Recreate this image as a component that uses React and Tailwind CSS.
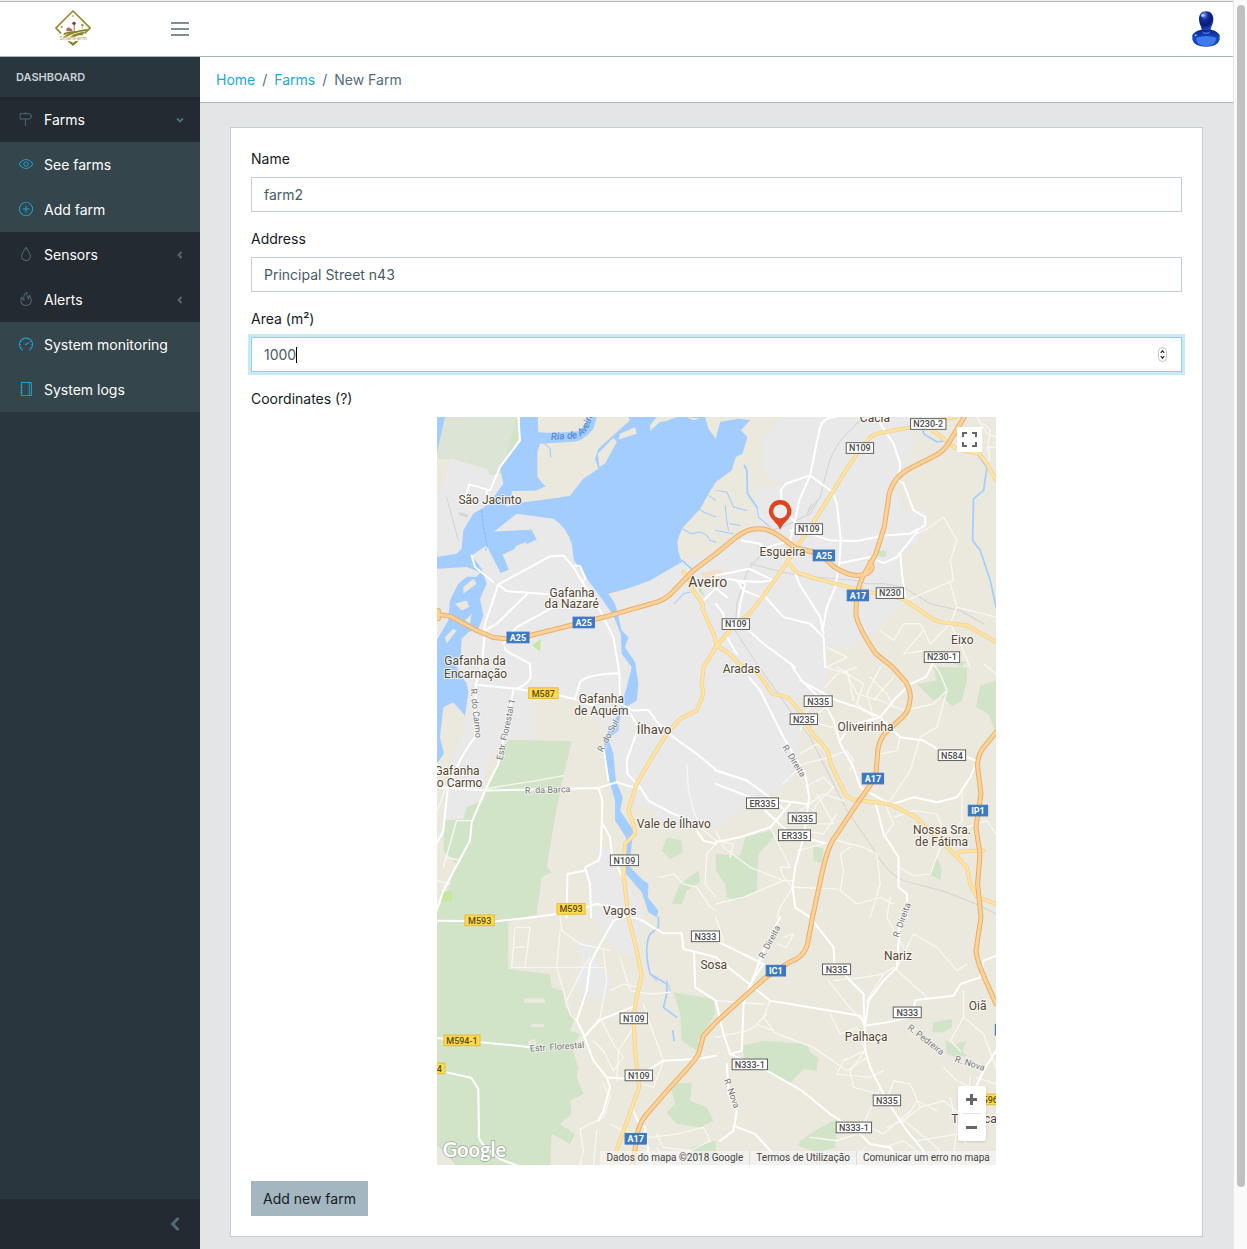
import React from "react";
import { SlDirection, SlEye, SlPlus, SlDrop, SlFire, SlSpeedometer, SlNotebook } from "react-icons/sl";

/* Map drawing. The canvas is 1677 x 2244 units; three units make one pixel. */

const MOTORWAYS = [
  "M5,605V580M5,592L40,597L120,640L170,661L210,665L280,655L400,625L520,595L660,555Q690,545 710,522L770,460L837,410L880,375Q915,345 940,338Q965,332 985,337Q1010,343 1035,362L1075,392Q1120,402 1150,412L1190,448Q1230,475 1262,475Q1300,474 1306,450L1300,435",
  "M1582,0L1537,75Q1520,105 1487,120L1417,155Q1370,180 1357,230L1342,330L1317,410L1277,480Q1257,520 1257,590Q1262,630 1317,710L1367,750L1407,795Q1424,825 1419,850Q1417,880 1397,900L1342,950Q1322,980 1322,1010L1317,1070Q1312,1090 1267,1150L1187,1270Q1172,1295 1157,1360L1127,1500L1112,1580Q1102,1620 1057,1635L987,1680L837,1815L800,1855L785,1910Q780,1925 700,2010L630,2090Q605,2120 600,2160L588,2244",
  "M1677,945L1645,985Q1620,1010 1622,1050L1632,1130L1617,1230L1629,1310L1622,1400L1632,1500L1617,1600Q1620,1630 1642,1680L1677,1760",
];

const MAIN_ROADS = [
  "M1557,0L1527,5L1427,30L1347,45Q1310,48 1297,65L1267,100L1227,160L1187,225L1127,320L1087,380L1052,435L977,540L937,590L887,630L837,690L800,750L795,800L800,830L780,880L730,905L690,950L640,1030L600,1100L575,1180L590,1220L595,1250L565,1280L560,1370L575,1500L600,1600L615,1675L600,1740L590,1800L595,1900L607,2010L575,2100L535,2210L525,2244",
  "M1052,430L1077,465L1137,485L1237,510L1297,525L1397,545L1457,585Q1490,610 1512,615L1590,625L1677,675",
  "M740,465L755,480L765,515L798,560L797,575L830,650L840,685L877,710L912,745L965,770L1007,830L1052,840L1087,880L1127,950L1172,1000L1182,1040L1225,1130Q1240,1150 1267,1150L1357,1160L1437,1200L1477,1240L1557,1315L1590,1350L1600,1400L1620,1438L1677,1460",
  "M1557,1315Q1562,1302 1580,1302L1640,1300",
  "M1487,40L1557,95L1627,110L1650,140L1677,190",
];

const WHITE_ROADS = [
  "M245,0L250,70L190,150L160,220L98,202L88,235M150,222L155,260",
  "M140,650L145,620L185,502L340,418L380,415L410,450L440,500L490,580L530,660L545,750L548,770",
  "M185,502L210,522L345,532L480,550M270,532L180,620L145,640L135,750L118,800",
  "M415,445L430,447L447,485L435,495M105,415L115,450L170,495",
  "M205,690Q200,700 240,718L280,740L282,780Q275,800 240,815L115,802M240,815L270,820M350,830L420,848L470,865M200,680L240,630L350,570",
  "M548,768Q450,770 430,795L417,840M548,768L550,860L590,880L635,878L665,920L710,960L780,1010L840,1060L930,1090L985,1130L1045,1180",
  "M575,880L605,930L570,1030L572,1070L610,1110L635,1150L700,1185L760,1210L800,1270L837,1280",
  "M118,800L115,960Q90,990 60,1050L35,1100L20,1240L0,1280",
  "M230,820L185,1040L145,1120L105,1215L100,1270L20,1420L0,1480",
  "M0,1110L150,1120L485,1112L540,1095L605,1115M500,990L515,1090M485,1112L497,1150L495,1215L520,1260L525,1310L555,1375M495,1215L492,1310L485,1330L445,1350L460,1400L463,1500",
  "M390,1500L392,1370L445,1360M0,1510L180,1512L290,1500L400,1485L480,1460L575,1475",
  "M570,1495L530,1510L485,1590L460,1640L450,1720L420,1810L440,1850L470,1930L510,1980L520,2010L500,2080L485,2110",
  "M575,1500Q610,1500 640,1525L680,1548L735,1548L740,1595L800,1610L837,1620",
  "M772,1605L775,1710L837,1750L860,1850L880,1910M510,1980L590,1985L680,1930L780,1925L837,1915",
  "M590,1768L490,1808L440,1860M0,1862L170,1878L290,1890M30,1965L105,1982L125,2015L127,2160Q130,2180 190,2225L240,2244",
  "M585,2070L605,2115L625,2130L640,2244",
  "M1197,0Q1160,0 1150,30L1135,100L1120,175L1087,250L1075,310L1060,370M1120,175L1047,200L1032,220L1035,270L1060,300L1080,320",
  "M1120,175L1187,225L1200,260L1212,370L1207,440L1195,510L1170,570L1157,640M1060,340L1120,350L1180,370L1260,372L1340,355L1420,350L1465,325L1465,300L1430,280L1400,200L1385,190L1390,140L1370,80L1330,20",
  "M1212,438L1260,428L1300,420L1340,438L1380,420L1440,345M1390,410L1395,470L1407,550",
  "M915,370L970,380L980,395L1060,370M837,475L937,455L1010,490L960,495L900,490L870,485M970,540L920,520L900,490L925,500L910,560L900,630M977,530L1040,600L1120,620L1160,660L1165,750M1060,430L1087,500L1150,600L1160,650",
  "M840,510L800,550M870,540L840,515M837,560L860,590L870,660L900,710M930,635L980,680L1075,750",
  "M937,780L970,820L1040,960L1075,1020L1105,1070L1117,1140L1100,1260L1075,1350L1067,1410L1075,1470L1120,1500L1190,1590L1193,1640L1240,1690L1280,1730L1285,1900L1300,1950L1350,2050L1410,2140L1460,2200L1470,2244",
  "M1067,750L1095,790L1165,860L1190,910L1210,980L1250,1050L1270,1110L1340,1150L1370,1160L1430,1140L1500,1155L1560,1140L1600,1080L1617,1040",
  "M1090,790L1200,850L1260,870L1330,900L1390,960L1460,970L1510,1000L1590,1020L1617,1030M1210,970L1240,925L1330,900L1370,850L1420,800L1467,780L1487,740",
  "M837,1060L930,1090M837,1100L940,1140L1030,1150L1110,1160M985,1180L1060,1250L1165,1278M837,1275L910,1260L1000,1230L1060,1160",
  "M1600,2160L1587,2070L1640,1960L1677,1900M1285,1825L1350,1815L1420,1800L1437,1748L1550,1735L1570,1700L1630,1680L1640,1630L1677,1615",
  "M837,1570L980,1640M837,1620L1000,1750L1270,1795L1285,1825M980,1640L940,1700L920,1760L915,1900L880,1910M1030,1500L980,1600L935,1720",
  "M880,1910L990,1960L1095,2020L1180,2090L1260,2140L1300,2180L1360,2190L1390,2244M870,1940L875,2030L900,2080L890,2140L850,2170M890,2125L955,2150L1010,2210M1390,1500L1380,1650L1340,1690L1295,1750L1285,1820",
  "M1317,1160L1340,1250L1385,1320L1385,1410L1410,1430L1410,1500",
];

const LANES = [
  "M235,1530L280,1530L265,1650L225,1650ZM230,1590L275,1588M265,1650L500,1650M370,1540L360,1650L400,1790L420,1810M370,1500L375,1540L430,1580L520,1600M390,1750L440,1650L460,1620",
  "M500,1600L510,1690L490,1800L450,1850M550,1620L580,1720L640,1730L700,1725M520,1720L560,1700L610,1710M620,1760L640,1820L680,1930L650,2010L620,2000M490,1800L530,1880L560,1920L530,1960L500,1900L470,1870M590,1830L545,1900L540,1990",
  "M500,2000L520,2040L500,2100L430,2135L440,2200L430,2244M520,2120L560,2140L640,2160L720,2150L800,2130L820,2170L760,2200L680,2190L660,2150M480,2140L470,2244M660,2190L700,2244",
  "M0,1390L40,1400M30,1320L70,1330M60,1210L20,1350M145,1115L300,1090L380,1075M60,1210L105,1210M0,1180L15,1150L25,1110",
  "M670,1380L710,1370L740,1400L780,1410L820,1470L837,1480M837,1280L810,1310L805,1400L837,1440M750,1040L755,1120L770,1180L790,1230L837,1270",
  "M1165,750L1230,770L1260,830L1330,850L1400,880L1490,860M1200,750L1280,800L1260,860L1310,900M1330,750L1290,830L1310,900M1370,780L1310,850M1165,810L1200,770L1260,750M1150,830L1110,880L1090,940M1165,870L1120,910L1180,930L1240,920M1230,760L1250,850M1300,780L1350,830L1370,870",
  "M1037,1100L1100,1040L1180,1020L1230,1000L1250,1030L1240,1060M1090,1180L1160,1130L1220,1150M1105,1110L1160,1080L1190,1110L1140,1160L1110,1220L1190,1220L1140,1130M1090,1010L1140,980L1170,1000M1090,1240L1160,1250L1200,1190",
  "M1390,960L1380,1000L1330,1010M1490,860L1530,820L1510,770L1490,740M1530,820L1500,930L1450,960L1420,1060L1380,1120L1360,1150M1340,1150L1370,1220L1340,1260M1370,1200L1430,1180L1500,1190L1520,1240M1575,1120L1575,1210L1550,1240L1480,1230M1590,1230L1650,1210L1677,1250",
  "M1410,550L1480,520L1550,490L1540,430L1560,370L1520,300L1480,330L1440,350M1330,640L1370,670L1400,620L1450,620L1480,680L1540,620M1540,500L1560,570L1540,620L1570,680L1600,750M1560,570L1677,600M1460,640L1400,710L1460,700L1520,740M1170,690L1230,720L1170,750",
  "M837,1240L860,1290L940,1350L1040,1390L1067,1390M837,1270L890,1280L880,1320M1060,1350L1030,1350L1040,1380L1067,1410L1030,1470L1020,1500M1000,1230L1060,1350M1080,1300L1200,1270L1280,1290L1320,1310M1210,1310L1220,1360L1210,1420L1260,1460L1330,1440L1370,1460M1320,1310L1330,1400L1300,1500M1210,1310L1240,1290M1070,1410L1200,1415M1385,1350L1430,1375L1480,1370L1510,1290L1530,1270",
  "M837,1460L920,1440L1040,1390M1040,1560L1070,1550L1050,1590L1020,1580M1360,1440L1350,1500L1400,1590M1000,1750L980,1800L1010,1840L960,1820L990,1790M840,1750L980,1760M1010,1845L1130,1890L1230,1960L1290,1920M960,1825L930,1840L837,1860",
  "M1175,1690L1230,1760L1285,1820M1190,1690L1280,1680L1340,1670L1370,1650L1470,1740M1380,1650L1430,1550L1500,1590L1560,1660L1590,1640M1290,1750L1340,1670M1180,1790L1210,1850L1260,1830L1285,1900L1220,1930L1200,1970L1300,1980L1340,1960",
  "M1285,1900L1240,1960L1250,2010L1330,2030M1330,2010L1280,2120L1340,2150L1420,2080M1350,2050L1370,1990L1420,2000L1450,2070L1520,2050L1570,2090M1410,2100L1440,2050L1500,2080M1390,2100L1500,2190L1530,2244M1440,2170L1560,2150L1590,2180M1580,1720L1580,1800L1540,1870L1570,1900M1580,1800L1640,1850L1677,1950M1617,1980L1677,2000M1520,1950L1560,1990L1600,2010",
  "M1285,2190L1240,2244M1120,2160L1200,2170L1260,2150M1340,2190L1400,2170L1440,2200M1540,2040L1560,2130L1550,2220M1450,2070L1400,2110L1350,2130M1600,1980L1590,2050",
  "M1620,0L1650,50L1677,60M1650,100L1660,40L1640,20M1657,130L1655,90L1677,90M1677,770L1640,740M837,1500L860,1570",
];

const RAILWAYS = [
  "M1280,0L1220,60Q1180,110 1170,160L1150,240L1120,290L1037,330L1000,340M1140,250L1110,290L1125,260M1000,395Q930,440 920,500L900,560L895,640L960,740L1060,880L1120,960L1180,1080L1230,1180L1300,1280Q1350,1370 1400,1390L1530,1425L1640,1470L1677,1490",
  "M940,440L1080,475L1200,485L1260,490L1290,500L1340,500L1400,510L1480,560L1570,580L1640,620M0,2180L40,2215L60,2244M30,240L65,370",
];

const PARKS = [
  "M215,968L405,972L375,1100L355,1200L330,1350L345,1365L315,1380L300,1490L215,1515L215,1655L340,1670L345,1710L380,1720L385,1770L415,1800L400,1840L430,1850L405,1890L425,1950L420,1980L440,2030L400,2050L405,2090L370,2120L415,2150L400,2180L345,2150L340,2244L60,2244L0,2180L0,1480L25,1440L60,1340L20,1300L25,1210L80,1205L90,1170L140,1150L150,1110Z",
  "M690,1260L735,1270L738,1305L700,1326L675,1300Z", "M785,1360L790,1395L750,1420L735,1460L705,1460L730,1400Z",
  "M925,1260L1007,1238L1010,1260L965,1310L960,1420L900,1450L870,1440L865,1400L837,1360L837,1310L910,1315Z",
  "M1130,1285L1160,1295L1155,1338L1130,1330Z", "M1440,800L1500,790L1490,750L1590,750L1590,790L1575,850L1545,868L1520,840L1490,850Z",
  "M1677,790L1630,805L1617,870L1655,890L1677,950Z", "M1500,1320L1515,1355L1510,1388L1475,1370Z",
  "M915,1885L980,1870L1110,1880L1120,1905L1145,1920L1140,1960L1100,1955L1060,1997L990,1965L925,1925Z",
  "M1200,2105L1195,2190L1140,2205L1085,2185L1090,2170L1150,2130Z", "M1490,1815L1545,1805L1545,1830L1520,1845L1485,1845Z",
  "M1525,1870L1555,1880L1590,1870L1575,1900L1590,1915L1560,1920L1530,1910Z", "M710,1725L830,1745L835,1790L805,1840L785,1870L780,1900L735,1870L730,1790Z",
  "M700,2000L765,1995L760,2050L810,2070L830,2110L790,2130L720,2120L690,2085L715,2060Z", "M760,2190L837,2170L837,2244L790,2244Z",
  "M1325,400L1350,402L1348,420L1325,418Z", "M1540,730L1590,735L1570,750Z", "M0,0L245,0L250,55L190,170L160,175L150,155L45,125L30,130L0,120Z",
];

const WATER = [
  "M0,0H25L0,110Z",
  "M250,0H303L305,46Q350,50 430,42L460,0H480L470,35Q440,72 410,74L310,80L302,105V180L325,208L300,220L230,222L225,240L265,255L400,236L440,185L485,155L475,125L485,95L580,10L575,0H805L815,35L837,65L850,15L905,5L940,10L912,40L932,60L917,110L897,120L885,160L837,195L815,230L790,275L735,335L722,370L724,400L735,435L640,490L580,512L515,530L535,560L545,600L555,640L575,660L565,690L595,735L605,800L600,850L575,865L550,900L545,940L515,965L530,1010L537,1090L558,1140L550,1180L590,1240L583,1300L575,1345L615,1385L635,1400L633,1440L665,1480L660,1500L635,1485L615,1425L568,1370V1260L535,1210V1150L515,1080L500,1010L505,960L545,890L570,810L585,750L555,710L552,650L530,595L495,545L440,470L412,430L405,380Q390,330 350,305L240,290L172,343L285,338L300,368L198,412L216,458L192,468L150,385L105,415L135,455L150,500L130,545L140,595L125,635L95,645L75,665L72,720L60,750L90,800L95,825L85,895L50,855L20,870L10,960L22,1010L0,1040V670L35,610L40,550L65,500L92,478L118,480L132,466L90,450L0,455V420L60,410L75,395L80,340L110,290L155,262L200,200L190,150L250,70Z",
];

const ISLETS = [
  "M483,110L530,62L540,75L505,140L488,150Z", "M550,50L595,30L600,50L575,58L545,68Z", "M640,25L660,0H720L690,12L670,15L640,42Z", "M750,0L790,5L770,10Z",
  "M240,385L270,375L268,385L230,400Z", "M55,560L90,550L98,570L75,580Z", "M25,660L50,635L60,640L30,680Z", "M85,610L105,590L100,620Z", "M80,510L110,485L120,500L80,530Z", "M0,580L8,610L0,640Z",
];

const RIVERS = [
  "M923,145L930,160L932,230L960,270M735,430L770,460",
  "M1450,0L1460,50L1500,75L1530,70M1620,110L1650,150L1640,220L1610,245L1607,370L1630,400L1660,490L1677,570",
  "M665,1500L665,1530L640,1550Q620,1590 640,1670L690,1700L690,1730L680,1770L720,1800M708,1840L712,1870",
];

const STREAMS = [
  "M960,270L965,300L1000,330M837,220L870,225L890,270L930,280M865,265L870,310L875,340M837,340L890,350M325,80L340,95L342,120M305,190L325,208M780,270L800,285L837,300M735,335L765,350L790,345L810,355L820,370L837,375M815,235L837,250M712,560L740,530L760,525M880,320L910,325",
  "M640,1670L660,1690M690,1690L700,1720M105,415L115,450L170,495",
];

/* [text, centre x, centre y, width] */
const SHIELDS_WHITE = [
  ["N230-2", 1474, 21, 108], ["N109", 1269, 93, 84], ["N109", 1116, 336, 84], ["N109", 897, 621, 84], ["N230", 1359, 528, 84], ["N230-1", 1515, 720, 108],
  ["N335", 1144, 852, 86], ["N235", 1101, 906, 84], ["N584", 1545, 1014, 84], ["ER335", 977, 1158, 98], ["N335", 1096, 1203, 86], ["ER335", 1073, 1254, 98],
  ["N109", 563, 1329, 86], ["N333", 806, 1557, 86], ["N109", 591, 1803, 84], ["N109", 606, 1974, 84], ["N335", 1199, 1656, 86], ["N333", 1411, 1785, 86],
  ["N333-1", 939, 1941, 108], ["N335", 1350, 2049, 84], ["N333-1", 1251, 2130, 108],
];
const SHIELDS_BLUE = [
  ["A25", 441, 616, 66], ["A25", 244, 661, 68], ["A25", 1161, 415, 66], ["A17", 1263, 535, 66], ["A17", 1308, 1084, 66], ["IP1", 1623, 1180, 60], ["IC1", 1017, 1660, 60], ["A17", 597, 2164, 66], ["", 1684, 1837, 20],
];
const SHIELDS_YELLOW = [
  ["M587", 320, 828, 90], ["M593", 403, 1475, 86], ["M593", 129, 1509, 90], ["M594-1", 76, 1869, 110], ["4", 8, 1953, 36], ["596", 1660, 2046, 70],
];

/* [text, centre x, baseline, size] */
const TOWNS = [
  ["São Jacinto", 160, 259, 36], ["Gafanha", 406, 538, 36], ["da Nazaré", 405, 573, 36], ["Aveiro", 813, 510, 42], ["Gafanha da", 115, 744, 36],
  ["Encarnação", 117, 781, 36], ["Esgueira", 1037, 415, 36], ["Cacia", 1314, 14, 36], ["Eixo", 1576, 679, 36], ["Aradas", 914, 766, 36],
  ["Gafanha", 494, 856, 36], ["de Aquém", 494, 891, 36], ["Ílhavo", 652, 949, 39], ["Gafanha", 61, 1072, 36], ["o Carmo", 69, 1107, 36],
  ["Oliveirinha", 1286, 939, 36], ["Vale de Ílhavo", 711, 1231, 36], ["Nossa Sra.", 1515, 1249, 36], ["de Fátima", 1514, 1285, 36], ["Vagos", 549, 1492, 36],
  ["Sosa", 831, 1654, 36], ["Nariz", 1383, 1627, 36], ["Oiã", 1622, 1777, 36], ["Palhaça", 1288, 1870, 36], ["T", 1554, 2116, 36], ["ca", 1660, 2116, 36],
];

/* [text, centre x, centre y, rotation] */
const STREETS = [
  ["R. do Carmo", 118, 888, 84], ["Estr. Florestal 1", 208, 937, -78], ["R. do Sul", 514, 956, -62], ["R. da Barca", 333, 1118, -2], ["R. Direita", 1072, 1031, 58],
  ["Estr. Florestal", 361, 1888, -4], ["R. Direita", 998, 1574, -62], ["R. Direita", 1395, 1508, -70], ["R. Nova", 885, 2028, 70], ["R. Pedreira", 1467, 1867, 38], ["R. Nova", 1599, 1938, 18],
];

function Paths({ list, ...rest }) {
  return (
    <g {...rest}>
      {list.map((d) => (
        <path key={d} d={d} />
      ))}
    </g>
  );
}

function Shields({ list, fill, stroke, color, bold }) {
  return list.map(([text, x, y, w]) => (
    <g key={text + x + y}>
      <rect x={x - w / 2 + 1} y={y - 16} width={w - 2} height={32} fill={fill} stroke={stroke} strokeWidth="3" />
      <text x={x} y={y + 10} textAnchor="middle" fontSize="27" fontWeight={bold ? 700 : 500} fill={color}>
        {text}
      </text>
    </g>
  ));
}

function MapDrawing() {
  const line = { fill: "none", strokeLinejoin: "round", strokeLinecap: "round" };
  return (
    <svg viewBox="0 0 1677 2244" preserveAspectRatio="xMidYMid slice" className="block h-full w-full font-['Roboto',sans-serif]" role="img" aria-label="Map of the Aveiro region">
      <rect width="1677" height="2244" fill="#ebe8dd" />
      <g fill="#e9e9e9">
        <path d="M0,440L5,300L45,125L160,150L200,200L230,280L360,290L430,440L520,540L735,435L850,400L930,330L960,320L950,220L1040,200L1000,185L977,160L980,60L1010,30L1040,0H1427V120L1377,200L1397,290L1477,275L1467,340L1397,420L1397,500L1407,550L1350,600L1320,645L1237,700L1170,680V820L1087,840V960L1070,1090L920,1175L837,1230L700,1240L640,1170L590,1160L560,1100L500,960L500,930L410,850H300L297,965H215L150,1030L145,1100L85,1200L25,1210L40,1050L85,930V880L0,850Z" />
        <path d="M480,1290L520,1300L560,1380L600,1440L625,1500L610,1560L590,1620L540,1600L500,1560L470,1500L463,1400L450,1360L490,1330Z" />
        <path d="M420,1555L470,1580L480,1640L525,1690L510,1745L440,1740L415,1700L435,1640Z" />
      </g>
      <Paths list={PARKS} fill="#d2e4c8" />
      <path d="M45,125L160,150L150,230L60,300L0,330V130Z" fill="#e9e9e9" />
      <path d="M0,125H40L0,260Z" fill="#ebe8dd" />
      <path d="M0,0H240L200,150L160,175L150,155L45,125L0,122Z" fill="#dbe4d5" />
      <path d="M262,1743H322L328,1756H262ZM282,1820H322V1829H282ZM275,1870L295,1865L300,1885H275ZM0,2185L60,2244H0Z" fill="#ebe8dd" />
      <path d="M312,665L287,684L310,703ZM12,1425L45,1420L47,1450L15,1456ZM790,510L805,540L785,520Z" fill="#c5e8a0" />
      <path d="M790,470L837,455V490L800,480ZM837,455L860,465L845,485ZM1040,375L1090,370L1080,410L1050,400Z" fill="#f3dfc5" />
      <path d="M65,285L95,292L92,302L70,295Z" fill="#d5d5d5" />

      <Paths list={WATER} fill="#a3ccff" />
      <path d="M225,222L300,222L380,240L265,255L205,270L225,245Z" fill="#ebe8dd" />
      <Paths list={ISLETS} fill="#ebe8dd" />
      <Paths list={RIVERS} {...line} stroke="#a3ccff" strokeWidth="5" />
      <Paths list={STREAMS} {...line} stroke="#a3ccff" strokeWidth="3" />
      <path d="M135,280L140,330L152,385L147,400" {...line} stroke="#7fa9ef" strokeWidth="2" strokeDasharray="8 5" />
      <Paths list={RAILWAYS} {...line} stroke="#d3d3d6" strokeWidth="3" />
      <Paths list={LANES} {...line} stroke="#f8f7f2" strokeWidth="4" />
      <Paths list={WHITE_ROADS} {...line} stroke="#ffffff" strokeWidth="6" />
      <Paths list={MAIN_ROADS} {...line} stroke="#f1d08b" strokeWidth="12" />
      <Paths list={MAIN_ROADS} {...line} stroke="#ffe3a3" strokeWidth="8" />
      <Paths list={MOTORWAYS} {...line} stroke="#e6b067" strokeWidth="15" />
      <Paths list={MOTORWAYS} {...line} stroke="#fed19b" strokeWidth="9" />

      <g fill="#737373" stroke="#ffffff" strokeWidth="5" strokeOpacity="0.7" paintOrder="stroke" fontSize="27" textAnchor="middle">
        {STREETS.map(([text, x, y, angle]) => (
          <text key={text + x} x={x} y={y + 9} transform={`rotate(${angle} ${x} ${y})`}>
            {text}
          </text>
        ))}
      </g>
      <path id="river-label" d="M343,69L410,65Q445,57 458,27L480,-40" fill="none" />
      <text fontSize="30" fontStyle="italic" fontWeight="500" fill="#5a8ed0">
        <textPath href="#river-label">Ria de Aveiro</textPath>
      </text>

      <Shields list={SHIELDS_WHITE} fill="#ffffff" stroke="#5f5f5f" color="#4b4b4b" />
      <Shields list={SHIELDS_BLUE} fill="#3b78c4" stroke="#3b78c4" color="#ffffff" bold />
      <Shields list={SHIELDS_YELLOW} fill="#ffdb4d" stroke="#e6b93a" color="#5a4a1c" />

      <g fill="#54452f" stroke="#ffffff" strokeWidth="6" strokeOpacity="0.8" paintOrder="stroke" strokeLinejoin="round" textAnchor="middle">
        {TOWNS.map(([text, x, y, size]) => (
          <text key={text + x} x={x} y={y + 1} fontSize={size}>
            {text}
          </text>
        ))}
      </g>

      <path d="M1030,338C1022,316 996,304 996,283A34,34 0 1 1 1064,283C1064,304 1038,316 1030,338Z" fill="#e0431f" />
      <circle cx="1030" cy="283" r="21" fill="#ededed" />
      <text x="18" y="2219" fontSize="60" fontWeight="700" fill="#ffffff" stroke="#8a938a" strokeWidth="5" strokeOpacity="0.7" paintOrder="stroke" className="font-['Lato',sans-serif]">
        Google
      </text>
    </svg>
  );
}

function FarmMap() {
  return (
    <div className="relative mx-auto aspect-[559/749] w-3/5 overflow-hidden font-['Roboto',sans-serif]">
      <MapDrawing />
      <button type="button" aria-label="Toggle fullscreen" className="absolute top-[10px] right-[14px] flex size-[25px] items-center justify-center bg-white">
        <svg viewBox="0 0 15 15" className="size-[15px]" fill="none" stroke="#666" strokeWidth="2">
          <path d="M1,5V1H5M10,1H14V5M14,10V14H10M5,14H1V10" />
        </svg>
      </button>
      <div className="absolute right-[10px] bottom-6 flex w-7 flex-col items-center rounded-xs bg-white shadow">
        <button type="button" aria-label="Zoom in" className="flex h-[27px] w-full items-center justify-center">
          <svg viewBox="0 0 11 11" className="size-[11px]" stroke="#666" strokeWidth="3">
            <path d="M0,5.5H11M5.5,0V11" />
          </svg>
        </button>
        <span className="h-px w-[19px] bg-[#e6e6e6]" />
        <button type="button" aria-label="Zoom out" className="flex h-[27px] w-full items-center justify-center">
          <svg viewBox="0 0 11 11" className="size-[11px]" stroke="#666" strokeWidth="3">
            <path d="M0,5.5H11" />
          </svg>
        </button>
      </div>
      <div className="absolute right-0 bottom-0 flex h-[14px] divide-x divide-[#dcdcd6] bg-[#f5f5f5]/70 text-[10px] leading-[14px] whitespace-nowrap text-[#444]">
        <span className="px-[6px]">Dados do mapa ©2018 Google</span>
        <a href="#terms" className="px-[6px]">Termos de Utilização</a>
        <a href="#report" className="px-[6px]">Comunicar um erro no mapa</a>
      </div>
    </div>
  );
}

function Logo() {
  return (
    <svg viewBox="0 0 108 108" className="size-9" role="img" aria-label="SmartFarm">
      <defs>
        <linearGradient id="gold" x1="0" y1="0" x2="1" y2="1">
          <stop offset="0" stopColor="#b08a50" />
          <stop offset="0.5" stopColor="#8f8a2c" />
          <stop offset="1" stopColor="#9c8a20" />
        </linearGradient>
      </defs>
      <path d="M18,70L3,54L54,3L105,54L89,70" fill="none" stroke="url(#gold)" strokeWidth="5" />
      <path d="M14,54L54,14L94,54" fill="none" stroke="#e6e0c8" strokeWidth="1.5" />
      <path d="M24,80Q50,62 100,56L92,64Q60,66 36,80ZM44,80Q66,66 90,66L82,76Q66,74 58,80ZM28,68Q50,62 72,62L60,68Q40,68 24,76Z" fill="#8a8424" />
      <path d="M34,62V56L40,52L52,58V64H36ZM56,62V42H59V62Z" fill="#a8705f" />
      <circle cx="57" cy="40" r="5" fill="#8b2f2f" />
      <circle cx="82" cy="45" r="4" fill="#a3a34a" />
      <circle cx="20" cy="51" r="3" fill="#b98c4c" />
      <path d="M54,15v6M51,18h6M82,48V56" stroke="#a3a34a" strokeWidth="2" />
      <path d="M36,92L50,95L54,99L60,94L72,92L54,108Z" fill="#8a8420" />
      <text x="54" y="90" textAnchor="middle" fontSize="16" fill="#b59c48" className="font-['Inter',sans-serif]">
        SmartFarm
      </text>
    </svg>
  );
}

function Avatar() {
  return (
    <svg viewBox="0 0 84 108" className="h-9 w-7" aria-hidden="true">
      <defs>
        <radialGradient id="head" cx="0.38" cy="0.2" r="0.85">
          <stop offset="0" stopColor="#6f9af0" />
          <stop offset="0.3" stopColor="#12309a" />
          <stop offset="0.65" stopColor="#0a1a7a" />
          <stop offset="1" stopColor="#2450d8" />
        </radialGradient>
        <linearGradient id="base" x1="0" y1="0" x2="0" y2="1">
          <stop offset="0" stopColor="#0b2280" />
          <stop offset="0.5" stopColor="#164ac8" />
          <stop offset="1" stopColor="#1238b8" />
        </linearGradient>
      </defs>
      <path d="M28,48H57L54,68H31Z" fill="#0f2a98" />
      <path d="M42,1C57,1 64,11 64,25C64,38 59,44 56,54Q42,60 29,54C27,44 21,38 21,25C21,11 28,1 42,1Z" fill="url(#head)" />
      <path d="M28,56Q42,63 57,56Q76,60 83,72V86Q76,107 42,107Q8,107 1,86V72Q8,60 28,56Z" fill="url(#base)" />
      <path d="M30,61Q42,68 55,61L52,67Q42,72 33,67Z" fill="#3d74ea" />
      <path d="M13,80Q42,70 72,80Q74,104 42,105Q10,104 13,80Z" fill="#3f7aec" />
      <circle cx="32" cy="13" r="5" fill="#a9c6ff" />
      <circle cx="11" cy="73" r="3" fill="#a9c6ff" />
    </svg>
  );
}

function NavItem({ icon: Icon, label, tone, arrow }) {
  const dark = tone === "dark";
  return (
    <a href="#nav" className={`flex h-[45px] items-center pr-4 pl-[19px] text-sm text-white ${dark ? "bg-[#232a31]" : "bg-[#34454b]"}`}>
      <Icon className={`mr-[11px] mb-[2px] size-[14px] shrink-0 ${dark ? "text-[#536c79]" : "text-[#20a8d8]"}`} />
      <span className="flex-1">{label}</span>
      {arrow && (
        <svg viewBox="0 0 8 8" className={`size-2 ${arrow === "down" ? "-rotate-90" : ""}`} fill="none" stroke="#536c79" strokeWidth="1.8">
          <path d="M5.5,1L2.5,4L5.5,7" />
        </svg>
      )}
    </a>
  );
}

function Sidebar() {
  return (
    <aside className="flex w-[200px] shrink-0 flex-col bg-[#2a363d]">
      <div className="flex h-10 items-center px-4 pt-0.5 text-[11px] font-semibold text-[#c9d2d6]">DASHBOARD</div>
      <nav>
        <NavItem icon={SlDirection} label="Farms" tone="dark" arrow="down" />
        <NavItem icon={SlEye} label="See farms" />
        <NavItem icon={SlPlus} label="Add farm" />
        <NavItem icon={SlDrop} label="Sensors" tone="dark" arrow="left" />
        <NavItem icon={SlFire} label="Alerts" tone="dark" arrow="left" />
        <NavItem icon={SlSpeedometer} label="System monitoring" />
        <NavItem icon={SlNotebook} label="System logs" />
      </nav>
      <button type="button" aria-label="Collapse sidebar" className="mt-auto flex h-[50px] items-center justify-end bg-[#232a31] pr-5">
        <svg viewBox="0 0 10 14" className="h-[14px] w-[10px]" fill="none" stroke="#536c79" strokeWidth="2.8">
          <path d="M8.5,1L2.5,7L8.5,13" />
        </svg>
      </button>
    </aside>
  );
}

function Field({ id, label, children }) {
  return (
    <div className="mb-4">
      <label htmlFor={id} className="mb-2 block leading-[21px]">{label}</label>
      {children}
    </div>
  );
}

const inputClass = "block h-[35px] w-full appearance-none border px-3 text-sm text-[#4a5a62] outline-none";

export default function App() {
  return (
    <div className="flex min-h-screen bg-white font-['Inter',sans-serif] text-sm text-[#151b1e]">
      <div className="flex min-w-0 flex-1 flex-col">
        <div className="h-px bg-[#f0f0f0]" />
        <header className="flex h-14 items-center border-t border-b border-t-[#b5b5b5] border-b-[#a4b7c1] bg-white pr-[13px] pb-0.5">
          <div className="flex w-[145px] justify-center">
            <Logo />
          </div>
          <button type="button" aria-label="Toggle menu" className="mt-0.5 ml-[25px]">
            <svg viewBox="0 0 20 16" className="h-4 w-5" stroke="#536c79" strokeWidth="1.5">
              <path d="M1,2H19M1,8H19M1,14H19" />
            </svg>
          </button>
          <button type="button" aria-label="Account" className="mt-0.5 ml-auto">
            <Avatar />
          </button>
        </header>
        <div className="flex flex-1">
          <Sidebar />
          <main className="min-w-0 flex-1 bg-[#e4e5e6]">
            <nav aria-label="Breadcrumb" className="flex h-[46px] items-center gap-[7px] border-b border-[#a4b7c1] bg-white px-4">
              <a href="#home" className="text-[#20a8d8]">Home</a>
              <span className="text-[#536c79]">/</span>
              <a href="#farms" className="text-[#20a8d8]">Farms</a>
              <span className="text-[#536c79]">/</span>
              <span className="text-[#536c79]">New Farm</span>
            </nav>
            <form className="mx-[30px] mt-6 mb-3 border border-[#c2cfd6] bg-white p-5" onSubmit={(e) => e.preventDefault()}>
              <Field id="name" label="Name">
                <input id="name" defaultValue="farm2" className={`${inputClass} border-[#c2cfd6]`} />
              </Field>
              <Field id="address" label="Address">
                <input id="address" defaultValue="Principal Street n43" className={`${inputClass} border-[#c2cfd6]`} />
              </Field>
              <Field id="area" label="Area (m²)">
                <div className="relative">
                  <input id="area" inputMode="numeric" defaultValue="1000" className={`${inputClass} border-[#8ad4ee] ring-3 ring-[#c9e9f3]`} />
                  <span aria-hidden="true" className="absolute top-[10px] left-[45px] h-4 w-px bg-black" />
                  <svg viewBox="0 0 9 15" className="absolute top-[10px] right-[15px] h-[15px] w-[9px]" aria-hidden="true">
                    <rect x="0.5" y="0.5" width="8" height="14" rx="4" fill="#fff" stroke="#c4c4c4" />
                    <path d="M2.8,5.8L4.5,3.8L6.2,5.8M2.8,9.2L4.5,11.2L6.2,9.2" fill="none" stroke="#333" strokeWidth="1.3" />
                  </svg>
                </div>
              </Field>
              <div className="mb-2 leading-[21px]">Coordinates (?)</div>
              <FarmMap />
              <button type="submit" className="mt-4 block h-[35px] bg-[#a4b7c1] px-3">Add new farm</button>
            </form>
          </main>
        </div>
      </div>
      <div aria-hidden="true" className="flex w-[14px] shrink-0 flex-col border-l border-[#e8e8e8] bg-[#fafafa] pt-[5px] pr-[2px] pb-[62px] pl-[3px]">
        <span className="w-2 flex-1 rounded-full bg-[#c1c1c1]" />
      </div>
    </div>
  );
}
